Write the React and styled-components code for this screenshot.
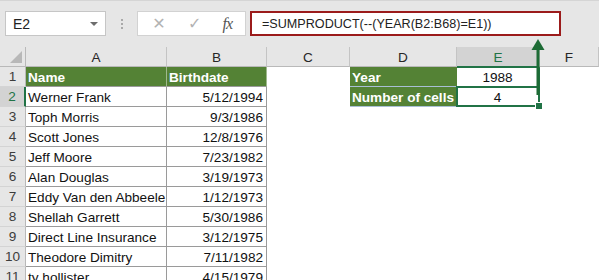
import React from 'react'
import styled, { createGlobalStyle } from 'styled-components'

const GlobalStyle = createGlobalStyle`
  html, body { margin: 0; padding: 0; background: #ffffff; }
  body { font-family: "Liberation Sans", Arial, sans-serif; overflow: hidden; }
`

const people = [
  ['Werner Frank', '5/12/1994'],
  ['Toph Morris', '9/3/1986'],
  ['Scott Jones', '12/8/1976'],
  ['Jeff Moore', '7/23/1982'],
  ['Alan Douglas', '3/19/1973'],
  ['Eddy Van den Abbeele', '1/12/1973'],
  ['Shellah Garrett', '5/30/1986'],
  ['Direct Line Insurance', '3/12/1975'],
  ['Theodore Dimitry', '7/11/1982'],
  ['ty hollister', '4/15/1979'],
]

const columns = ['A', 'B', 'C', 'D', 'E', 'F']

function App() {
  return (
    <>
      <GlobalStyle />
      <Page>
        <TopBar>
          <NameBox>
            <span>E2</span>
            <Caret />
          </NameBox>
          <Dots>
            <i /><i /><i />
          </Dots>
          <FxButtons>
            <Glyph>✕</Glyph>
            <Glyph>✓</Glyph>
            <FxLabel>fx</FxLabel>
          </FxButtons>
          <Formula>=SUMPRODUCT(--(YEAR(B2:B68)=E1))</Formula>
        </TopBar>

        <Sheet>
          <Corner><CornerTri /></Corner>
          {columns.map(c => (
            <ColHead key={c} active={c === 'E'}>{c}</ColHead>
          ))}

          <RowHead>1</RowHead>
          <Cell variant="green">Name</Cell>
          <Cell variant="green">Birthdate</Cell>
          <Cell variant="blank" />
          <Cell variant="greenSide">Year</Cell>
          <Cell variant="value" align="center">1988</Cell>
          <Cell variant="blank" />

          {people.map(([name, date], i) => (
            <React.Fragment key={name}>
              <RowHead active={i === 0}>{i + 2}</RowHead>
              <Cell variant="table">{name}</Cell>
              <Cell variant="table" align="right">{date}</Cell>
              <Cell variant="blank" />
              {i === 0 ? (
                <>
                  <Cell variant="greenSide">Number of cells</Cell>
                  <Cell variant="value" align="center">4</Cell>
                </>
              ) : (
                <>
                  <Cell variant="blank" />
                  <Cell variant="blank" />
                </>
              )}
              <Cell variant="blank" />
            </React.Fragment>
          ))}

          <Selection><Handle /></Selection>
          <Arrow>
            <svg width="14" height="56" viewBox="0 0 14 56">
              <polygon points="7,0 0.5,11 13.5,11" fill="#1d6b35" />
              <rect x="5.5" y="10" width="3" height="46" fill="#1d6b35" />
            </svg>
          </Arrow>
        </Sheet>
      </Page>
    </>
  )
}

const Page = styled.div`
  width: 599px;
  height: 280px;
  overflow: hidden;
  background: #ffffff;
`

const TopBar = styled.div`
  height: 47px;
  background: #e6e6e6;
  border-top: 1px solid #d5d5d5;
  box-sizing: border-box;
  display: flex;
  align-items: flex-start;
  padding: 10px 0 0 5px;
`

const NameBox = styled.div`
  width: 101px;
  height: 25px;
  box-sizing: border-box;
  background: #ffffff;
  border: 1px solid #c6c6c6;
  display: flex;
  align-items: center;
  justify-content: space-between;
  padding: 0 7px 0 7px;
  font-size: 14px;
  color: #222;
`

const Caret = styled.span`
  width: 0;
  height: 0;
  border-left: 4px solid transparent;
  border-right: 4px solid transparent;
  border-top: 4px solid #6d6d6d;
`

const Dots = styled.div`
  width: 31px;
  height: 25px;
  display: flex;
  flex-direction: column;
  align-items: center;
  justify-content: center;
  gap: 2px;
  i {
    display: block;
    width: 2px;
    height: 2px;
    background: #a9a9a9;
  }
`

const FxButtons = styled.div`
  width: 109px;
  height: 25px;
  box-sizing: border-box;
  background: #ffffff;
  border: 1px solid #d2d2d2;
  display: flex;
  align-items: center;
  justify-content: space-between;
  padding: 0 13px 0 13px;
`

const Glyph = styled.span`
  font-family: "DejaVu Sans", sans-serif;
  font-size: 16px;
  color: #b3b3b3;
  width: 16px;
  text-align: center;
`

const FxLabel = styled.span`
  font-family: "Liberation Serif", serif;
  font-style: italic;
  font-size: 16px;
  color: #555;
  letter-spacing: -1px;
`

const Formula = styled.div`
  margin-left: 4px;
  width: 311px;
  height: 25px;
  box-sizing: border-box;
  background: #ffffff;
  border: 2px solid #9b1b1b;
  display: flex;
  align-items: center;
  padding-left: 10px;
  font-size: 12.6px;
  color: #222;
  white-space: nowrap;
`

const Sheet = styled.div`
  position: relative;
  display: grid;
  grid-template-columns: 26px 141px 100px 83px 107px 83px 1fr;
  grid-auto-rows: 20px;
  font-size: 13.6px;
  color: #111;
`

const Corner = styled.div`
  position: relative;
  background: #e6e6e6;
  border-right: 1px solid #b9b9b9;
  border-bottom: 1px solid #b9b9b9;
`

const CornerTri = styled.span`
  position: absolute;
  right: 3px;
  bottom: 3px;
  width: 0;
  height: 0;
  border-left: 12px solid transparent;
  border-bottom: 12px solid #b8b8b8;
`

const ColHead = styled.div`
  background: ${p => (p.active ? '#d3d3d3' : '#e6e6e6')};
  color: ${p => (p.active ? '#217346' : '#262626')};
  border-right: 1px solid #c4c4c4;
  border-bottom: ${p => (p.active ? '2px solid #217346' : '1px solid #b9b9b9')};
  margin-bottom: ${p => (p.active ? '-1px' : '0')};
  display: flex;
  align-items: center;
  justify-content: center;
  padding-top: 1px;
  box-sizing: border-box;
  z-index: ${p => (p.active ? 1 : 0)};
`

const RowHead = styled.div`
  background: ${p => (p.active ? '#d3d3d3' : '#e6e6e6')};
  color: ${p => (p.active ? '#217346' : '#3c3c3c')};
  border-right: ${p => (p.active ? '2px solid #217346' : '1px solid #b9b9b9')};
  border-bottom: 1px solid #d4d4d4;
  display: flex;
  align-items: center;
  justify-content: center;
  box-sizing: border-box;
`

const variants = {
  green: `
    background: #548235;
    color: #ffffff;
    font-weight: bold;
    border-right: 1px solid #9fb98d;
    border-bottom: 1px solid #9a9a9a;
  `,
  greenSide: `
    background: #548235;
    color: #ffffff;
    font-weight: bold;
    border-bottom: 1px solid #a9bfd6;
    border-right: 1px solid #548235;
  `,
  table: `
    background: #ffffff;
    border-right: 1px solid #9a9a9a;
    border-bottom: 1px solid #9a9a9a;
  `,
  value: `
    background: #ffffff;
    border-right: 1px solid #217346;
    border-bottom: 1px solid #217346;
  `,
  blank: `
    background: #ffffff;
  `,
}

const Cell = styled.div`
  ${p => variants[p.variant]}
  box-sizing: border-box;
  display: flex;
  align-items: center;
  justify-content: ${p => (p.align === 'right' ? 'flex-end' : p.align === 'center' ? 'center' : 'flex-start')};
  padding: 1px 3px 0 2px;
  white-space: nowrap;
  overflow: hidden;
`

const Selection = styled.div`
  position: absolute;
  z-index: 2;
  left: 456px;
  top: 39px;
  width: 84px;
  height: 21px;
  box-sizing: border-box;
  border: 2px solid #217346;
  pointer-events: none;
`

const Handle = styled.span`
  position: absolute;
  right: -5px;
  bottom: -5px;
  width: 6px;
  height: 6px;
  background: #217346;
  border: 1px solid #ffffff;
`

const Arrow = styled.div`
  position: absolute;
  z-index: 3;
  left: 531px;
  top: -8px;
  width: 14px;
  height: 56px;
  line-height: 0;
`

export default App
